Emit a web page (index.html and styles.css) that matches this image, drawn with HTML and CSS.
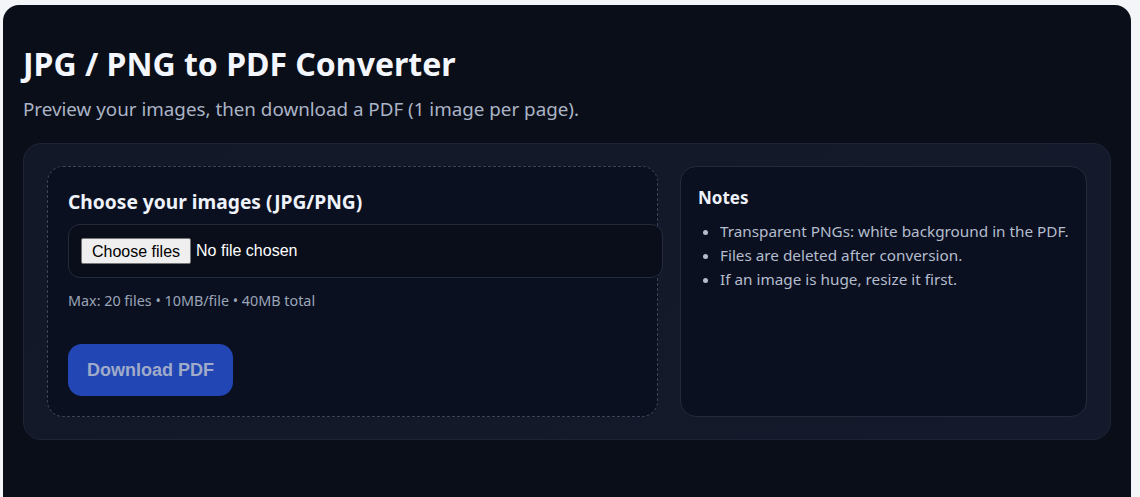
FILE: index.html
```html
<!DOCTYPE html>
<html lang="en">
<head>
    <meta charset="UTF-8">
    <meta name="viewport" content="width=device-width, initial-scale=1.0">
    <title>JPG / PNG to PDF Converter</title>
    <link rel="stylesheet" href="styles.css">
</head>
<body>

    <div class="card">
        <h1>JPG / PNG to PDF Converter</h1>
        <p class="lead">Preview your images, then download a PDF (1 image per page).</p>

        <div class="panel">
            <form class="drop" id="uploadForm">
                <h2>Choose your images (JPG/PNG)</h2>
                <div class="file-field">
                    <input type="file" id="images" name="images" accept="image/jpeg,image/png" multiple>
                    <label for="images" class="file-btn">Choose files</label>
                    <span id="fileName" class="file-name">No file chosen</span>
                </div>
                <p class="hint">Max: 20 files &bull; 10MB/file &bull; 40MB total</p>
                <button type="submit" id="downloadBtn" disabled>Download PDF</button>
            </form>

            <div class="notes">
                <h3>Notes</h3>
                <ul>
                    <li>Transparent PNGs: white background in the PDF.</li>
                    <li>Files are deleted after conversion.</li>
                    <li>If an image is huge, resize it first.</li>
                </ul>
            </div>
        </div>
    </div>

    <script>
        const input = document.getElementById('images');
        const fileName = document.getElementById('fileName');
        const btn = document.getElementById('downloadBtn');

        // Show what was picked and enable the button
        input.addEventListener('change', () => {
            const count = input.files.length;
            if (count === 0) {
                fileName.textContent = 'No file chosen';
            } else if (count === 1) {
                fileName.textContent = input.files[0].name;
            } else {
                fileName.textContent = count + ' files';
            }
            btn.disabled = count === 0;
        });
    </script>

</body>
</html>
```

FILE: styles.css
```css
body {
    font-family: "Noto Sans", "Open Sans", sans-serif;
    margin: 0;
    padding: 5px 9px 0 3px;
    background-color: #f3f5f9;
    color: #e6ebf5;
}
.card {
    background-color: #0a0e18;
    border-radius: 16px 16px 0 0;
    padding: 20px 20px 60px;
    min-height: 472px;
    box-sizing: border-box;
}
h1 {
    margin: 19px 0 0;
    font-size: 32px;
    line-height: 40px;
    font-weight: 700;
    color: #f3f6fc;
}
.lead {
    margin: 12px 0 0;
    font-size: 18.8px;
    line-height: 26px;
    color: #aab4c6;
}
.panel {
    display: grid;
    grid-template-columns: 611px 1fr;
    gap: 22px;
    margin-top: 21px;
    padding: 22px 23px;
    background: linear-gradient(135deg, #121827, #141a2b);
    border: 1px solid #1d2435;
    border-radius: 18px;
}
.drop {
    padding: 20px;
    background-color: #0b1020;
    border: 1px dashed #3a4458;
    border-radius: 16px;
}
.drop h2 {
    margin: 2px 0 9px;
    font-size: 19.2px;
    line-height: 26px;
    color: #eef2fa;
}
.file-field {
    display: flex;
    align-items: center;
    gap: 5px;
    width: 100%;
    padding: 13px 12px;
    font-family: "Liberation Sans", Arial, sans-serif;
    font-size: 16px;
    color: #ffffff;
    background-color: #0a0e1a;
    border: 1px solid #232b3b;
    border-radius: 12px;
}
.file-field input {
    position: absolute;
    width: 1px;
    height: 1px;
    opacity: 0;
}
.file-btn {
    padding: 4px 10px 3px;
    line-height: 17px;
    color: #000000;
    background-color: #efefef;
    border: 1px solid #767676;
    border-radius: 2px;
    cursor: pointer;
}
.file-btn:hover {
    background-color: #e5e5e5;
}
.hint {
    margin: 13px 0 0;
    font-size: 14.35px;
    line-height: 20px;
    color: #9aa5b8;
}
button {
    margin-top: 33px;
    padding: 16px 19px 15px;
    font-family: "Liberation Sans", Arial, sans-serif;
    font-size: 18px;
    font-weight: 700;
    color: #ffffff;
    background-color: #2d5be3;
    border: none;
    border-radius: 14px;
    cursor: pointer;
}
button:disabled {
    color: #9fabc9;
    background-color: #2246b4;
    cursor: not-allowed;
}
.notes {
    padding: 17px;
    background-color: #0b1020;
    border: 1px solid #232b3b;
    border-radius: 16px;
}
.notes h3 {
    margin: 2px 0 10px;
    font-size: 17px;
    color: #eef2fa;
}
.notes ul {
    margin: 0;
    padding-left: 22px;
    font-size: 15.3px;
    line-height: 24px;
    color: #b4bdcd;
}
```
